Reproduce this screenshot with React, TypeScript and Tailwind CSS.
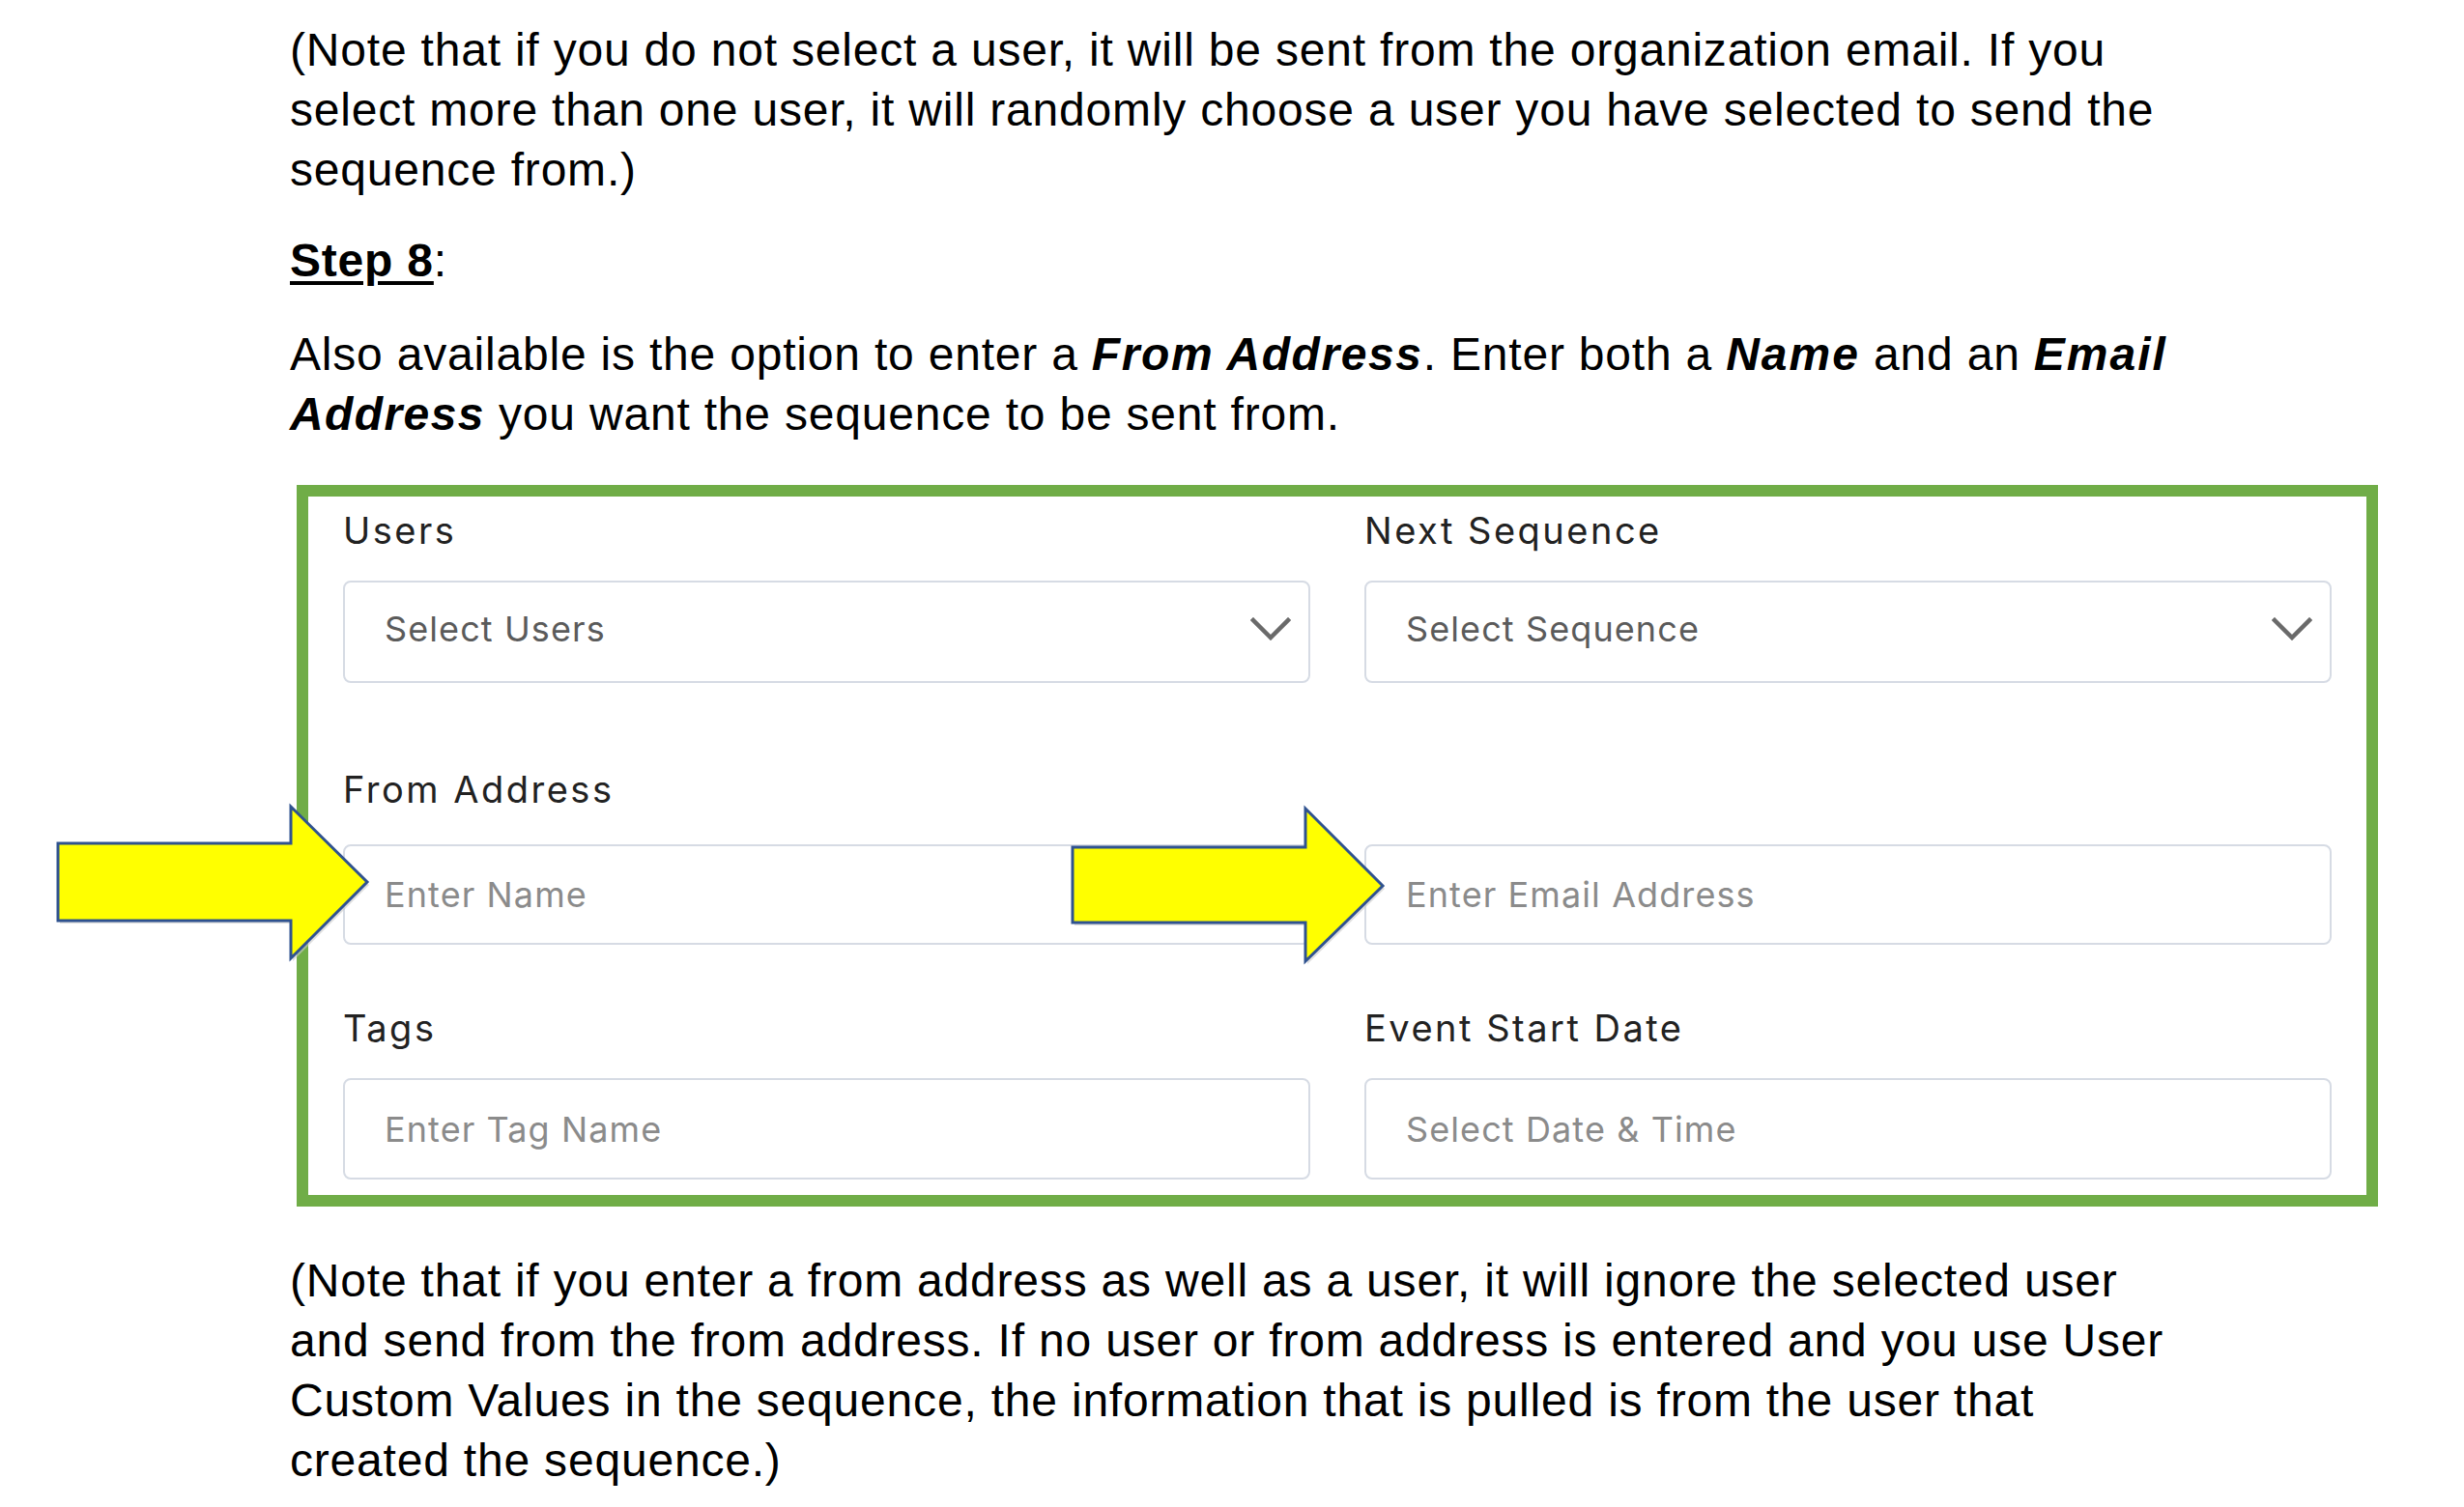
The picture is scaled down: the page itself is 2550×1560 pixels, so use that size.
import React from 'react';

const body = { fontFamily: '"Liberation Sans", Arial, sans-serif' };
const ui = { fontFamily: 'Inter, "Noto Sans", sans-serif' };

function Chevron() {
  return (
    <svg width="42" height="24" viewBox="0 0 42 24" fill="none">
      <path d="M3 3 L21 21 L39 3" stroke="#6a6a6a" strokeWidth="4.5" strokeLinecap="square" />
    </svg>
  );
}

function Field({ label, placeholder, dark, select, gap, h, pb = '' }: { label?: string; placeholder: string; dark?: boolean; select?: boolean; gap: string; h: string; pb?: string }) {
  return (
    <div className="flex flex-col">
      <div className="h-[40px] leading-[40px] text-[38px] text-[#222222] tracking-[2.5px] whitespace-nowrap">{label ?? ''}</div>
      <div className={`${gap} ${h} ${pb} flex items-center justify-between rounded-lg border-2 border-[#d6dbe4] bg-white pl-[41px] pr-[18px]`}>
        <span className={`text-[36px] leading-[40px] tracking-[1.1px] ${dark ? 'text-[#5b5b5b]' : 'text-[#8b8b8b]'}`}>{placeholder}</span>
        {select && <Chevron />}
      </div>
    </div>
  );
}

export default function App() {
  return (
    <div className="relative w-[2550px] h-[1560px] overflow-hidden bg-white text-black" style={body}>
      <div className="pl-[300px] pt-[21px] w-[2265px] text-[48px] leading-[62px] tracking-[0.8px]">
        <p>
          (Note that if you do not select a user, it will be sent from the organization email. If you select more than one user, it will randomly choose a user you have selected to send the sequence from.)
        </p>
        <p className="mt-[32px]">
          <span className="font-bold underline decoration-[4px] underline-offset-[5px]">Step 8</span>:
        </p>
        <p className="mt-[35px]">
          Also available is the option to enter a <b className="italic tracking-[1.6px]">From Address</b>. Enter both a{' '}
          <b className="italic tracking-[2px]">Name</b> and an <b className="italic tracking-[2px]">Email</b>{' '}
          <b className="italic tracking-[1.4px]">Address</b> you want the sequence to be sent from.
        </p>

        {/* form screenshot */}
        <div className="mt-[42px] ml-[7px] w-[2154px] border-[12px] border-[#70ad47] bg-white px-[36px] pt-[15px] pb-[16px]" style={ui}>
          <div className="grid grid-cols-2 gap-x-[56px]">
            <Field label="Users" placeholder="Select Users" dark select gap="mt-[32px]" h="h-[106px]" pb="pb-[6px]" />
            <Field label="Next Sequence" placeholder="Select Sequence" dark select gap="mt-[32px]" h="h-[106px]" pb="pb-[6px]" />
          </div>
          <div className="mt-[90px] grid grid-cols-2 gap-x-[56px]">
            <Field label="From Address" placeholder="Enter Name" gap="mt-[37px]" h="h-[104px]" />
            <Field placeholder="Enter Email Address" gap="mt-[37px]" h="h-[104px]" />
          </div>
          <div className="mt-[66px] grid grid-cols-2 gap-x-[56px]">
            <Field label="Tags" placeholder="Enter Tag Name" gap="mt-[32px]" h="h-[105px]" />
            <Field label="Event Start Date" placeholder="Select Date & Time" gap="mt-[32px]" h="h-[105px]" />
          </div>
        </div>

        <p className="mt-[46px]">
          (Note that if you enter a from address as well as a user, it will ignore the selected user and send from the from address. If no user or from address is entered and you use User Custom Values in the sequence, the information that is pulled is from the user that created the sequence.)
        </p>
      </div>

      {/* yellow callout arrows */}
      <svg className="pointer-events-none absolute left-0 top-0" width="2550" height="1560">
        <g fill="#c9c9c9" opacity="0.6" transform="translate(2 3)">
          <polygon points="60,873 301,873 301,835 380,913 301,992 301,953 60,953" />
          <polygon points="1110,877 1351,877 1351,837 1431,917 1351,995 1351,955 1110,955" />
        </g>
        <g fill="#ffff00" stroke="#2f528f" strokeWidth="3" strokeLinejoin="miter">
          <polygon points="60,873 301,873 301,835 380,913 301,992 301,953 60,953" />
          <polygon points="1110,877 1351,877 1351,837 1431,917 1351,995 1351,955 1110,955" />
        </g>
      </svg>
    </div>
  );
}
